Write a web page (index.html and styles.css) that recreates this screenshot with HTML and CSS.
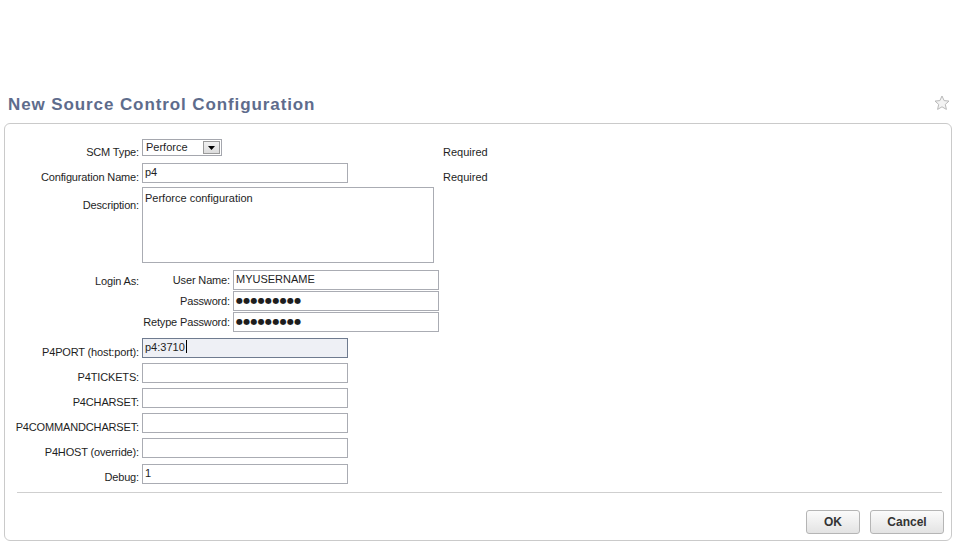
FILE: index.html
```html
<!DOCTYPE html>
<html>
<head>
<meta charset="utf-8">
<title>New Source Control Configuration</title>
<link rel="stylesheet" href="styles.css">
</head>
<body>
<div class="page">
  <div class="header">
    <h1 class="title">New Source Control Configuration</h1>
    <svg class="star" width="16" height="16" viewBox="0 0 16 16">
      <polygon points="8,1 10.1,5.6 15,6.1 11.3,9.4 12.4,14.4 8,11.8 3.6,14.4 4.7,9.4 1,6.1 5.9,5.6" fill="#f3f3f3" stroke="#b9b9b9" stroke-width="1" stroke-linejoin="round"/>
    </svg>
  </div>
  <div class="panel">
    <div class="form">
      <div class="row h24">
        <div class="label pt3">SCM Type:</div>
        <div class="control">
          <div class="select">
            <span class="select-text">Perforce</span>
            <span class="select-btn"><svg width="7" height="4" viewBox="0 0 7 4"><polygon points="0,0 7,0 3.5,4" fill="#000"/></svg></span>
          </div>
        </div>
        <div class="note pt3">Required</div>
      </div>
      <div class="row h24">
        <div class="label">Configuration Name:</div>
        <div class="control"><div class="field">p4</div></div>
        <div class="note">Required</div>
      </div>
      <div class="row h83">
        <div class="label pt8">Description:</div>
        <div class="control"><div class="textarea">Perforce configuration</div></div>
      </div>
      <div class="row h68">
        <div class="label pt1">Login As:</div>
        <div class="control">
          <div class="login">
            <div class="sublabel">User Name:</div>
            <div class="field">MYUSERNAME</div>
            <div class="sublabel">Password:</div>
            <div class="field dots">●●●●●●●●●</div>
            <div class="sublabel">Retype Password:</div>
            <div class="field dots">●●●●●●●●●</div>
          </div>
        </div>
      </div>
      <div class="row h25">
        <div class="label">P4PORT (host:port):</div>
        <div class="control"><div class="field focused">p4:3710<span class="caret"></span></div></div>
      </div>
      <div class="row h25">
        <div class="label">P4TICKETS:</div>
        <div class="control"><div class="field"></div></div>
      </div>
      <div class="row h25">
        <div class="label">P4CHARSET:</div>
        <div class="control"><div class="field"></div></div>
      </div>
      <div class="row h25">
        <div class="label">P4COMMANDCHARSET:</div>
        <div class="control"><div class="field"></div></div>
      </div>
      <div class="row h26">
        <div class="label">P4HOST (override):</div>
        <div class="control"><div class="field"></div></div>
      </div>
      <div class="row h20">
        <div class="label pt3">Debug:</div>
        <div class="control"><div class="field">1</div></div>
      </div>
    </div>
    <div class="separator"></div>
    <div class="buttons">
      <button class="btn btn-ok">OK</button>
      <button class="btn btn-cancel">Cancel</button>
    </div>
  </div>
</div>
</body>
</html>
```

FILE: styles.css
```css
html, body {
  margin: 0;
  padding: 0;
  background: #ffffff;
}
body {
  font-family: "Liberation Sans", Arial, sans-serif;
  font-size: 11px;
  color: #1e1e1e;
}
.page {
  padding-top: 95px;
}
.header {
  display: flex;
  justify-content: space-between;
  align-items: flex-start;
  height: 20px;
  padding: 0 9px 0 8px;
  margin-bottom: 8px;
}
.title {
  margin: 0;
  font-size: 17px;
  line-height: 20px;
  font-weight: bold;
  letter-spacing: 0.9px;
  color: #5e6c8c;
}
.star {
  display: block;
}
.panel {
  margin: 0 7px 0 4px;
  border: 1px solid #cacaca;
  border-radius: 6px;
  padding: 15px 7px 6px 0;
}
.row {
  display: grid;
  grid-template-columns: 137px 301px auto;
  align-items: start;
}
.h20 { height: 20px; }
.h24 { height: 24px; }
.h25 { height: 25px; }
.h26 { height: 26px; }
.h68 { height: 68px; }
.h83 { height: 83px; }
.label {
  text-align: right;
  padding-right: 3px;
  padding-top: 4px;
  line-height: 20px;
  letter-spacing: -0.15px;
  white-space: nowrap;
}
.note {
  padding-top: 4px;
  line-height: 20px;
}
.pt1 { padding-top: 1px; }
.pt3 { padding-top: 3px; }
.pt8 { padding-top: 8px; }
.control {
  display: flex;
  flex-direction: column;
}
.field {
  box-sizing: border-box;
  width: 206px;
  height: 20px;
  border: 1px solid #aaacb3;
  background: #ffffff;
  padding: 0 2px;
  line-height: 17px;
  white-space: nowrap;
  overflow: hidden;
}
.field.focused {
  border-color: #6f7b8f;
  background: #eef0f5;
}
.caret {
  display: inline-block;
  width: 1px;
  height: 13px;
  background: #000;
  vertical-align: -2px;
  margin-left: 1px;
}
.field.dots {
  font-family: "DejaVu Sans", sans-serif;
  font-size: 8px;
  letter-spacing: 0.3px;
  line-height: 18px;
}
.select {
  box-sizing: border-box;
  width: 80px;
  height: 17px;
  border: 1px solid #a5a7ae;
  display: flex;
  align-items: center;
  justify-content: space-between;
  padding: 0 0 0 3px;
}
.select-text {
  line-height: 15px;
}
.select-btn {
  box-sizing: border-box;
  width: 17px;
  height: 13px;
  margin-right: 1px;
  border: 1px solid #9a9a9a;
  background: linear-gradient(#f1f1f1, #dcdcdc);
  display: flex;
  align-items: center;
  justify-content: center;
}
.select-btn svg {
  display: block;
  margin-top: 1px;
}
.textarea {
  box-sizing: border-box;
  width: 292px;
  height: 76px;
  border: 1px solid #aaacb3;
  padding: 3px 2px;
  line-height: 14px;
}
.login {
  display: grid;
  grid-template-columns: 89px 206px;
  column-gap: 3px;
  row-gap: 1px;
  margin-left: -1px;
}
.sublabel {
  text-align: right;
  line-height: 20px;
  letter-spacing: -0.15px;
  white-space: nowrap;
}
.separator {
  height: 1px;
  background: #cfcfcf;
  margin: 8px 2px 17px 12px;
}
.buttons {
  display: flex;
  justify-content: flex-end;
  gap: 10px;
}
.btn {
  box-sizing: border-box;
  height: 24px;
  border: 1px solid #b5b5b5;
  border-radius: 3px;
  background: linear-gradient(#fbfbfb, #e3e3e3);
  font-family: "Liberation Sans", Arial, sans-serif;
  font-size: 12px;
  font-weight: bold;
  color: #333333;
  padding: 0;
  margin: 0;
}
.btn-ok { width: 54px; }
.btn-cancel { width: 74px; }
```
